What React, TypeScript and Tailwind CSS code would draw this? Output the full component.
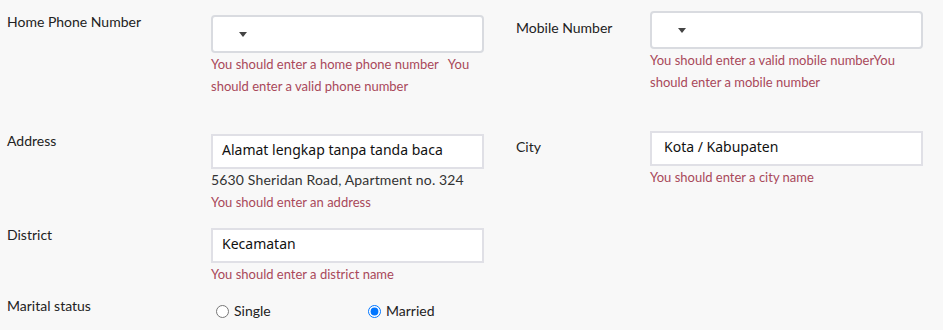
import React from "react";

const labelCls = "font-['Lato',sans-serif] text-[14px] leading-[20px] text-[#222]";
const errCls = "font-['Lato',sans-serif] text-[13px] leading-[22px] text-[#a9485a] whitespace-nowrap";
const inputTextCls = "font-['Noto_Sans',sans-serif] text-[14px] text-[#111]";

function SelectBox() {
  return (
    <div className="h-[38px] w-[273px] rounded-[4px] border-2 border-[#d9dbe0] bg-white flex items-center pl-[26px]">
      <span className="block w-0 h-0 border-l-[4.5px] border-r-[4.5px] border-t-[5px] border-l-transparent border-r-transparent border-t-[#444]" />
    </div>
  );
}

function TextBox({ value, pad = "pl-[9px]" }: { value: string; pad?: string }) {
  return (
    <div className={`h-[35px] w-[273px] border-2 border-[#e0e0e6] bg-white flex items-center pb-[4px] ${pad}`}>
      <span className={inputTextCls}>{value}</span>
    </div>
  );
}

export default function App() {
  return (
    <div className="w-[943px] h-[330px] bg-[#f8f8f8] flex overflow-hidden">
      {/* left column */}
      <div className="w-[509px] pl-[7px] flex flex-col">
        <div className="flex items-start mt-[12px]">
          <div className={`w-[204px] ${labelCls}`}>Home Phone Number</div>
          <div className="pt-[3px]">
            <SelectBox />
            <div className={errCls}>
              <span>You should enter a home phone number</span>
              <span className="ml-[9px]">You</span>
            </div>
            <div className={errCls}>should enter a valid phone number</div>
          </div>
        </div>

        <div className="flex items-start mt-[34px]">
          <div className={`w-[204px] ${labelCls}`}>Address</div>
          <div className="pt-[3px]">
            <TextBox value="Alamat lengkap tanpa tanda baca" />
            <div className="font-['Lato',sans-serif] text-[14px] tracking-[0.15px] leading-[22px] text-[#333]">
              5630 Sheridan Road, Apartment no. 324
            </div>
            <div className={errCls}>You should enter an address</div>
          </div>
        </div>

        <div className="flex items-start mt-[12px]">
          <div className={`w-[204px] ${labelCls}`}>District</div>
          <div className="pt-[3px]">
            <TextBox value="Kecamatan" />
            <div className={errCls}>You should enter a district name</div>
          </div>
        </div>

        <div className="flex items-start mt-[11px]">
          <div className={`w-[204px] ${labelCls}`}>Marital status</div>
          <div className="pt-[5px] flex">
            <label className="w-[152px] flex items-center font-['Lato',sans-serif] text-[14px] leading-[20px] text-[#222]">
              <input type="radio" name="marital" className="m-0 ml-[5px] mr-[5px] w-[13px] h-[13px]" />
              Single
            </label>
            <label className="flex items-center font-['Lato',sans-serif] text-[14px] leading-[20px] text-[#222]">
              <input type="radio" name="marital" defaultChecked className="m-0 ml-[5px] mr-[5px] w-[13px] h-[13px]" />
              Married
            </label>
          </div>
        </div>
      </div>

      {/* right column */}
      <div className="flex-1 pl-[7px] flex flex-col">
        <div className="flex items-start mt-[11px]">
          <div className={`w-[134px] mt-[7px] ${labelCls}`}>Mobile Number</div>
          <div>
            <SelectBox />
            <div className={errCls}>You should enter a valid mobile numberYou</div>
            <div className={errCls}>should enter a mobile number</div>
          </div>
        </div>

        <div className="flex items-start mt-[38px]">
          <div className={`w-[134px] mt-[6px] ${labelCls}`}>City</div>
          <div>
            <TextBox value="Kota / Kabupaten" pad="pl-[12px]" />
            <div className={errCls}>You should enter a city name</div>
          </div>
        </div>
      </div>
    </div>
  );
}
